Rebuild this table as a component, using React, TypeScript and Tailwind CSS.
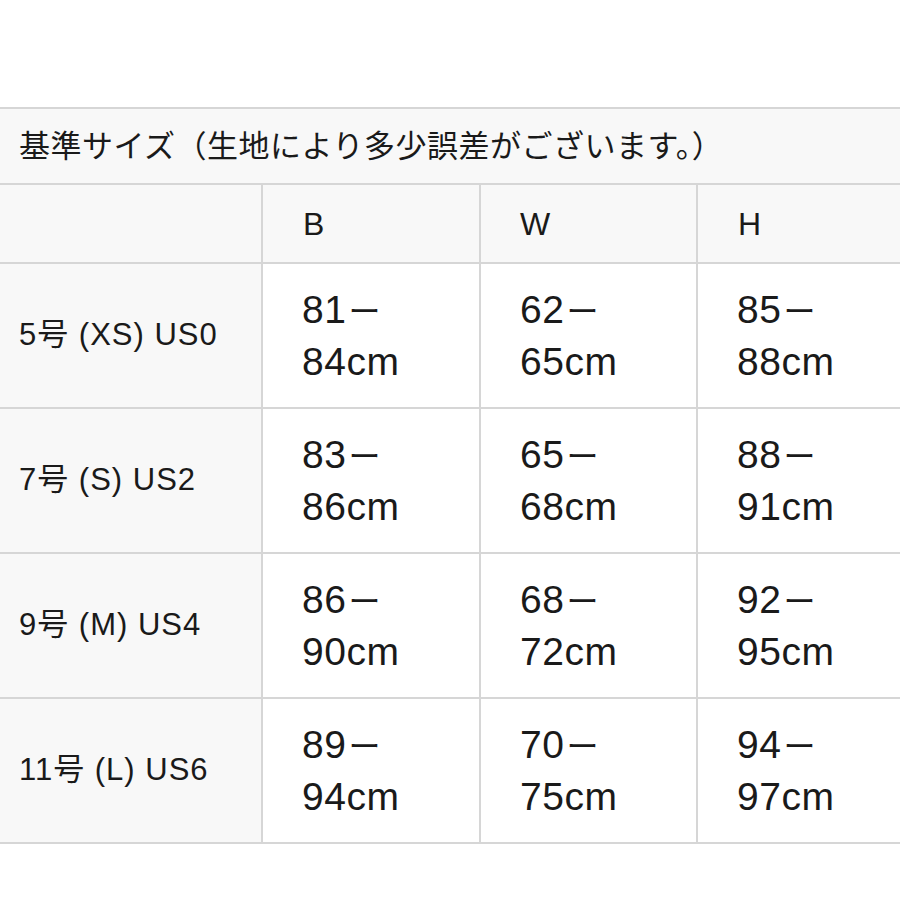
import React from "react";

const rows = [
  { label: "5号 (XS) US0", b: ["81", "84cm"], w: ["62", "65cm"], h: ["85", "88cm"] },
  { label: "7号 (S) US2", b: ["83", "86cm"], w: ["65", "68cm"], h: ["88", "91cm"] },
  { label: "9号 (M) US4", b: ["86", "90cm"], w: ["68", "72cm"], h: ["92", "95cm"] },
  { label: "11号 (L) US6", b: ["89", "94cm"], w: ["70", "75cm"], h: ["94", "97cm"] },
];

const font = { fontFamily: '"Liberation Sans", "Noto Sans CJK JP", sans-serif' };

function Val({ lines }: { lines: string[] }) {
  return (
    <div className="bg-white flex flex-col justify-center pl-[39px] text-[39px] leading-[50px] tracking-[0.5px] text-[#1a1a1a]">
      <div>
        {lines[0]}
        <span className="ml-[2px] text-[32px]">ー</span>
      </div>
      <div>{lines[1]}</div>
    </div>
  );
}

export default function App() {
  return (
    <div className="w-[900px] h-[900px] overflow-hidden bg-white" style={font}>
      <div className="h-[107px]" />
      <div className="w-[930px] grid grid-cols-[261px_216px_215px_1fr] gap-[2px] bg-[#d6d6d6] py-[2px]">
        <div className="col-span-4 bg-[#f8f8f8] h-[74px] flex items-center pl-[19px] pt-[2px] text-[31px] tracking-[0.5px] text-[#1a1a1a]">
          基準サイズ（生地により多少誤差がございます。）
        </div>
        <div className="bg-[#f8f8f8] h-[77px]" />
        <div className="bg-[#f8f8f8] h-[77px] flex items-center pl-[40px] text-[32px] text-[#1a1a1a]">B</div>
        <div className="bg-[#f8f8f8] h-[77px] flex items-center pl-[39px] text-[32px] text-[#1a1a1a]">W</div>
        <div className="bg-[#f8f8f8] h-[77px] flex items-center pl-[40px] text-[32px] text-[#1a1a1a]">H</div>
        {rows.map((r) => (
          <React.Fragment key={r.label}>
            <div className="bg-[#f8f8f8] h-[143px] flex items-center pl-[19px] text-[31px] tracking-[1px] text-[#1a1a1a]">
              {r.label}
            </div>
            <Val lines={r.b} />
            <Val lines={r.w} />
            <Val lines={r.h} />
          </React.Fragment>
        ))}
      </div>
    </div>
  );
}
